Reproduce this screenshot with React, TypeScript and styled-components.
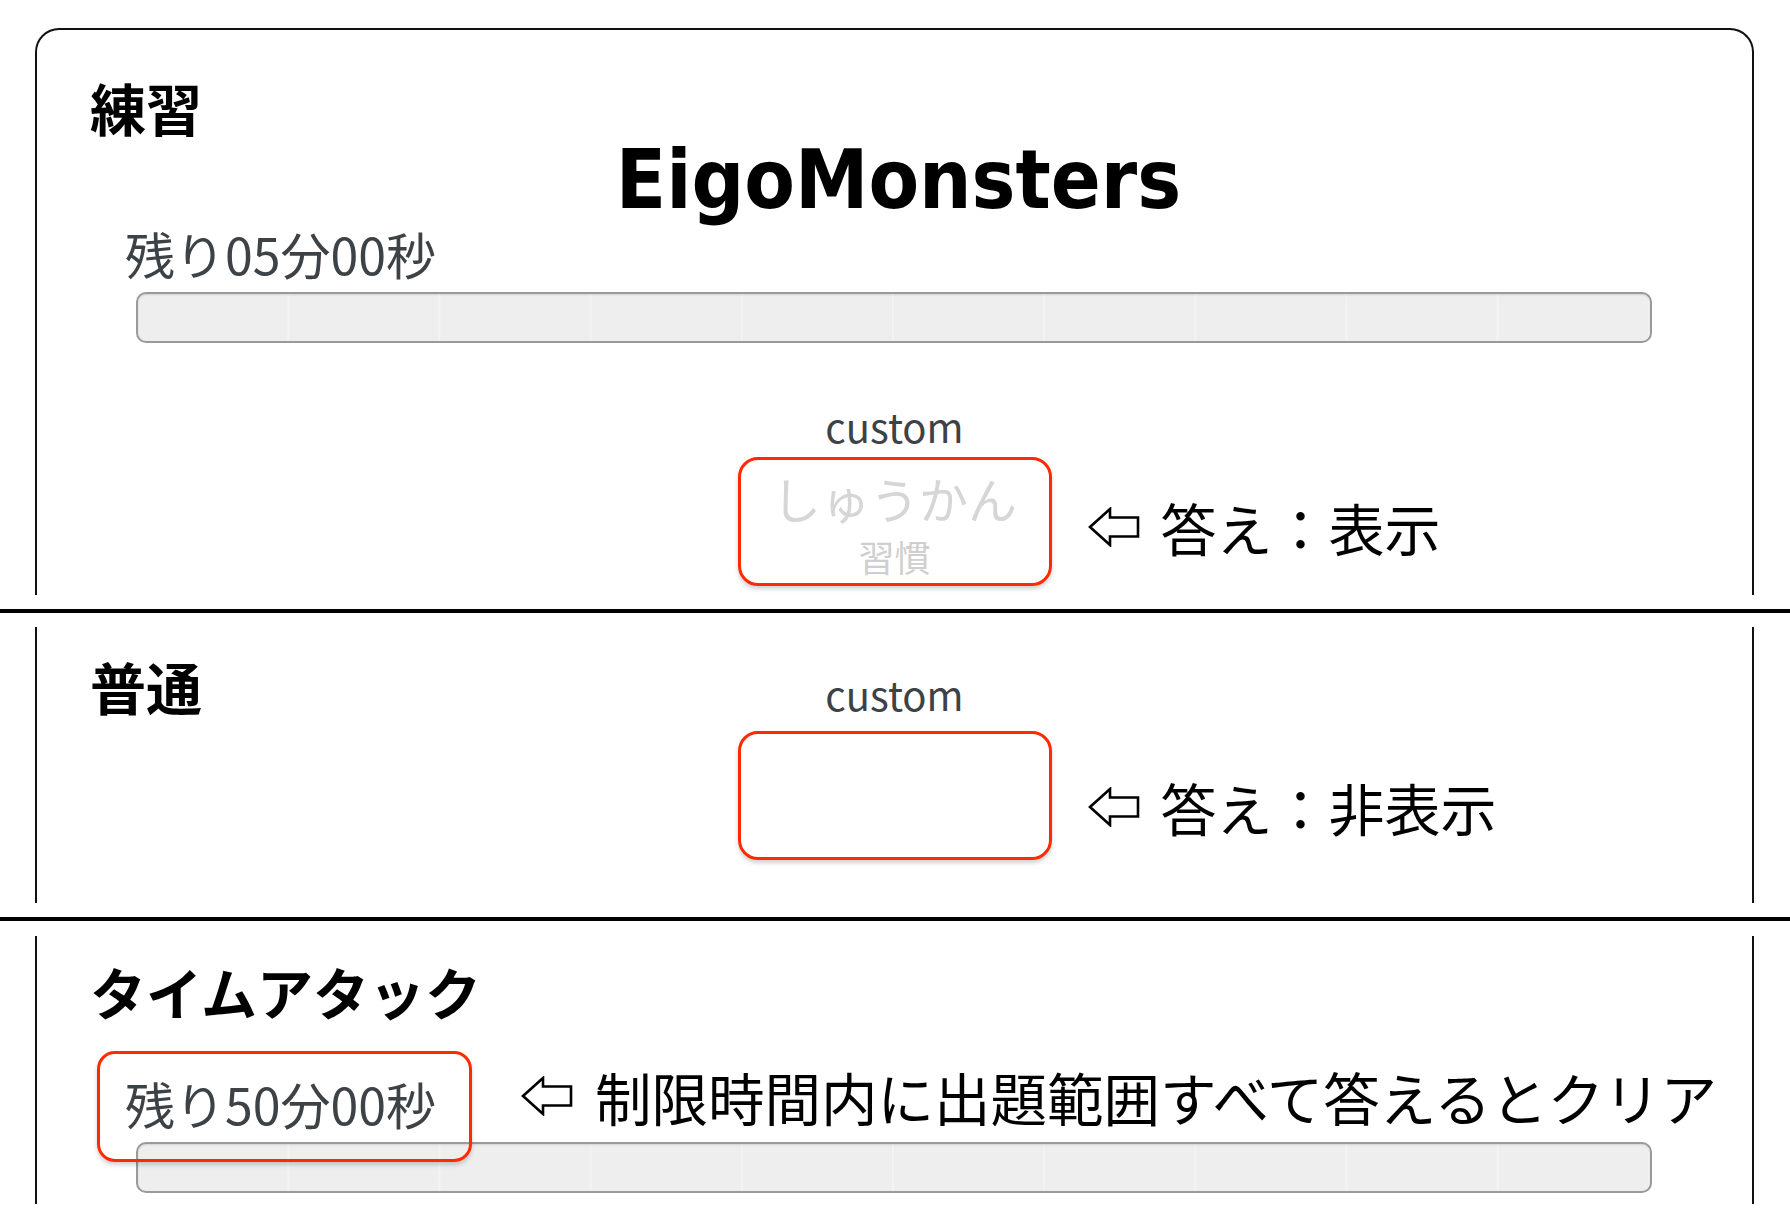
import React from 'react'
import styled, { createGlobalStyle, css } from 'styled-components'

const GlobalStyle = createGlobalStyle`
  html, body {
    margin: 0;
    padding: 0;
    background: #fff;
  }
  body {
    font-family: 'Noto Sans CJK JP', 'Noto Sans', sans-serif;
    color: #000;
  }
`

const Page = styled.div`
  width: 1790px;
  height: 1224px;
  overflow: hidden;
  background: #fff;
`

const Slice = styled.section<{ $pt: number; $pb: number }>`
  padding: ${p => p.$pt}px 0 ${p => p.$pb}px;
`

const Frame = styled.div<{ $cap?: boolean; $h: number }>`
  box-sizing: border-box;
  height: ${p => p.$h}px;
  margin: 0 36px 0 35px;
  border-left: 2px solid #111;
  border-right: 2px solid #111;
  overflow: hidden;
  ${p =>
    p.$cap &&
    css`
      border-top: 2px solid #111;
      border-radius: 24px 24px 0 0;
    `}
`

const Rule = styled.hr`
  margin: 0;
  border: 0;
  height: 4px;
  background: #000;
`

const Heading = styled.h2<{ $mt?: number }>`
  margin: ${p => p.$mt || 0}px 0 0;
  padding-left: 53px;
  font-size: 56px;
  line-height: 54px;
  font-weight: 700;
  white-space: nowrap;
`

const Title = styled.h1`
  margin: 5px 0 0;
  padding-left: 8px;
  text-align: center;
  font-family: 'DejaVu Sans Condensed', 'DejaVu Sans', sans-serif;
  font-stretch: condensed;
  font-size: 82px;
  line-height: 82px;
  font-weight: 700;
`

const TimerBlock = styled.div`
  padding-left: 88px;
`

const TimerLabel = styled.div<{ $mt: number }>`
  position: relative;
  margin-top: ${p => p.$mt}px;
  font-size: 50px;
  line-height: 50px;
  color: #3d4246;
  white-space: nowrap;
`

// red annotation frame drawn over the countdown text
const Highlight = styled.span`
  position: absolute;
  inset: -27px -36px -34px -28px;
  border: 3px solid #ff2a00;
  border-radius: 18px;
  box-shadow: 0 3px 4px rgba(0, 0, 0, 0.18);
`

const Bar = styled.div<{ $mt: number; $ml: number }>`
  box-sizing: border-box;
  width: 1516px;
  height: 51px;
  margin: ${p => p.$mt}px 0 0 ${p => p.$ml}px;
  border: 2px solid #9a9a9a;
  border-radius: 10px;
  background:
    linear-gradient(90deg, transparent calc(100% - 2px), rgba(255, 255, 255, 0.3) calc(100% - 2px)) 0 0 / 10% 100%,
    #edeeed;
  box-shadow: inset 0 1px 2px rgba(0, 0, 0, 0.12);
`

const QuizGrid = styled.div<{ $mt: number }>`
  display: grid;
  grid-template-columns: 1fr 314px 1fr;
  margin-top: ${p => p.$mt}px;
`

const Side = styled.div`
  grid-column: 1;
`

const QuizColumn = styled.div`
  grid-column: 2;
  display: flex;
  flex-direction: column;
  align-items: center;
`

const FieldLabel = styled.div<{ $mt: number }>`
  margin-top: ${p => p.$mt}px;
  font-size: 40px;
  line-height: 43px;
  color: #3d4246;
`

const AnswerBox = styled.div<{ $mt: number }>`
  box-sizing: border-box;
  width: 314px;
  height: 129px;
  margin-top: ${p => p.$mt}px;
  padding-top: 14px;
  display: flex;
  flex-direction: column;
  align-items: center;
  gap: 16px;
  border: 3px solid #ff2a00;
  border-radius: 20px;
  box-shadow: 0 3px 4px rgba(0, 0, 0, 0.18);
`

const Reading = styled.div`
  font-size: 49px;
  line-height: 48px;
  color: #d6d6d6;
  white-space: nowrap;
`

const Kanji = styled.div`
  font-size: 36px;
  line-height: 36px;
  color: #cfcfcf;
`

const Annotation = styled.div<{ $mb?: number; $ml?: number }>`
  display: flex;
  align-items: center;
  gap: 21px;
  margin: 0 0 ${p => p.$mb || 0}px ${p => p.$ml || 0}px;
  font-size: 56px;
  line-height: 56px;
  color: #000;
  white-space: nowrap;
`

const SideNote = styled(Annotation)`
  grid-column: 3;
  align-self: end;
  padding-left: 36px;
`

const LongNote = styled(Annotation)`
  font-size: 56.5px;
  gap: 22px;
`

const TimerRow = styled.div`
  display: flex;
  align-items: flex-start;
  margin-top: 50px;
  padding-left: 88px;
`

const ArrowIcon = () => (
  <svg width="52" height="40" viewBox="0 0 52 40" fill="none">
    <path
      d="M2 20 L22 2 L22 10.5 L50 10.5 L50 29.5 L22 29.5 L22 38 Z"
      stroke="#000"
      strokeWidth="2.6"
      strokeLinejoin="miter"
    />
  </svg>
)

export default function App() {
  return (
    <Page>
      <GlobalStyle />

      <Slice $pt={28} $pb={14}>
        <Frame $cap $h={567}>
          <Heading $mt={50}>練習</Heading>
          <Title>EigoMonsters</Title>
          <TimerBlock>
            <TimerLabel $mt={7}>残り05分00秒</TimerLabel>
            <Bar $mt={14} $ml={11} />
          </TimerBlock>
          <QuizGrid $mt={62}>
            <QuizColumn>
              <FieldLabel $mt={0}>custom</FieldLabel>
              <AnswerBox $mt={9}>
                <Reading>しゅうかん</Reading>
                <Kanji>習慣</Kanji>
              </AnswerBox>
            </QuizColumn>
            <SideNote $mb={31}>
              <ArrowIcon />
              <span>答え：表示</span>
            </SideNote>
          </QuizGrid>
        </Frame>
      </Slice>

      <Rule />

      <Slice $pt={14} $pb={14}>
        <Frame $h={276}>
          <QuizGrid $mt={32}>
            <Side>
              <Heading>普通</Heading>
            </Side>
            <QuizColumn>
              <FieldLabel $mt={14}>custom</FieldLabel>
              <AnswerBox $mt={15} />
            </QuizColumn>
            <SideNote $mb={25}>
              <ArrowIcon />
              <span>答え：非表示</span>
            </SideNote>
          </QuizGrid>
        </Frame>
      </Slice>

      <Rule />

      <Slice $pt={15} $pb={20}>
        <Frame $h={268}>
          <Heading $mt={28}>タイムアタック</Heading>
          <TimerRow>
            <TimerLabel $mt={10}>
              残り50分00秒
              <Highlight />
            </TimerLabel>
            <LongNote $ml={85}>
              <ArrowIcon />
              <span>制限時間内に出題範囲すべて答えるとクリア</span>
            </LongNote>
          </TimerRow>
          <Bar $mt={14} $ml={99} />
        </Frame>
      </Slice>
    </Page>
  )
}
